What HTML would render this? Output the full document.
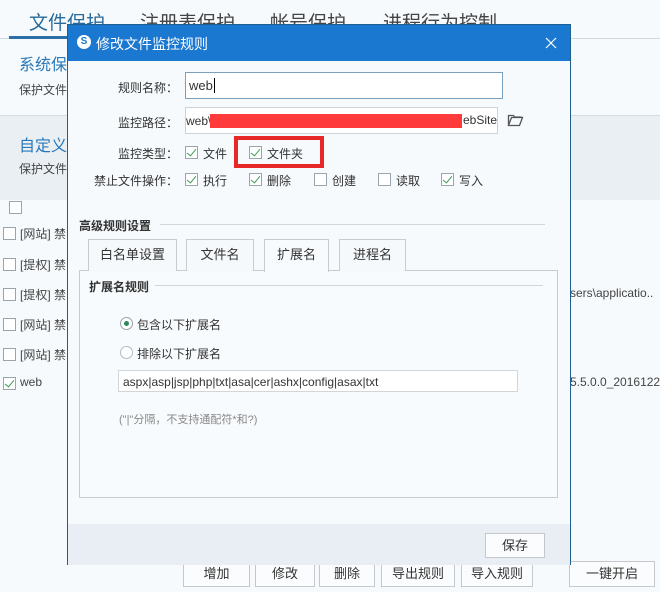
<!DOCTYPE html>
<html><head><meta charset="utf-8"><style>
*{margin:0;padding:0;box-sizing:border-box}
body{width:660px;height:592px;overflow:hidden;background:#f6fafc;font-family:"Liberation Sans","Noto Sans CJK SC",sans-serif;font-size:12px;color:#333;position:relative}
.a{position:absolute;white-space:nowrap}
.cb{position:absolute;width:13px;height:13px;border:1px solid #9aa4ac;background:#fff}
.cb.on::after{content:"";position:absolute;left:3px;top:0px;width:4px;height:8px;border:solid #3a9a5a;border-width:0 1.5px 1.5px 0;transform:rotate(40deg)}
.btn{position:absolute;height:26px;border:1px solid #c4c8cc;background:#fbfcfd;text-align:center;line-height:24px;font-size:13px;color:#333}
.tab{position:absolute;top:239px;height:32px;border:1px solid #c8ccd0;border-bottom:none;background:#f6f9fb;text-align:center;line-height:30px;font-size:13px;color:#333}
</style></head><body>
<div class="a" style="left:29px;top:8px;font-size:19px;color:#2a6a9a">文件保护</div>
<div class="a" style="left:140px;top:8px;font-size:19px;color:#444">注册表保护</div>
<div class="a" style="left:270px;top:8px;font-size:19px;color:#444">帐号保护</div>
<div class="a" style="left:383px;top:8px;font-size:19px;color:#444">进程行为控制</div>
<div class="a" style="left:0;top:38px;width:660px;height:1px;background:#d0d8de"></div>
<div class="a" style="left:9px;top:36px;width:70px;height:3px;background:#2a6fa8"></div>
<div class="a" style="left:19px;top:51px;font-size:16px;color:#2a78b8">系统保护</div>
<div class="a" style="left:19px;top:81px;font-size:12px;color:#444">保护文件</div>
<div class="a" style="left:0;top:115px;width:660px;height:85px;background:#e9eff3;border-top:1px solid #d6dde2"></div>
<div class="a" style="left:19px;top:132px;font-size:16px;color:#2a78b8">自定义</div>
<div class="a" style="left:19px;top:160px;font-size:12px;color:#444">保护文件</div>
<div class="cb" style="left:9px;top:201px"></div>
<div class="cb" style="left:3px;top:227px"></div><div class="a" style="left:20px;top:225px;font-size:12px;color:#444">[网站] 禁</div>
<div class="cb" style="left:3px;top:258px"></div><div class="a" style="left:20px;top:256px;font-size:12px;color:#444">[提权] 禁</div>
<div class="cb" style="left:3px;top:288px"></div><div class="a" style="left:20px;top:286px;font-size:12px;color:#444">[提权] 禁</div>
<div class="cb" style="left:3px;top:318px"></div><div class="a" style="left:20px;top:316px;font-size:12px;color:#444">[网站] 禁</div>
<div class="cb" style="left:3px;top:348px"></div><div class="a" style="left:20px;top:346px;font-size:12px;color:#444">[网站] 禁</div>
<div class="cb on" style="left:3px;top:377px"></div><div class="a" style="left:20px;top:375px;font-size:12px;color:#444">web</div>
<div class="a" style="left:570px;top:286px;font-size:12px;color:#444">sers\applicatio..</div>
<div class="a" style="left:570px;top:375px;font-size:12px;color:#444">5.5.0.0_2016122</div>
<div class="btn" style="left:183px;top:561px;width:67px">增加</div>
<div class="btn" style="left:255px;top:561px;width:60px">修改</div>
<div class="btn" style="left:319px;top:561px;width:56px">删除</div>
<div class="btn" style="left:381px;top:561px;width:74px">导出规则</div>
<div class="btn" style="left:461px;top:561px;width:72px">导入规则</div>
<div class="btn" style="left:569px;top:561px;width:86px">一键开启</div>

<div class="a" style="left:67px;top:24px;width:504px;height:541px;border:1px solid #1d5f8f;background:#f6fafd">
 <div class="a" style="left:0;top:0;width:502px;height:36px;background:#1b78d0"></div>
 <div class="a" style="left:9px;top:10px;width:14px;height:14px;border-radius:50%;background:#fff;color:#1b78d0;font-size:10px;font-weight:bold;text-align:center;line-height:14px">S</div>
 <div class="a" style="left:28px;top:9px;color:#fff;font-size:14px">修改文件监控规则</div>
 <svg class="a" style="left:477px;top:12px" width="12" height="12" viewBox="0 0 12 12"><path d="M1 1L11 11M11 1L1 11" stroke="#fff" stroke-width="1.2" fill="none"/></svg>
 <div class="a" style="left:0;top:499px;width:502px;height:41px;background:#e8eef3"></div>
</div>
<div class="a" style="left:118px;top:79px;font-size:12px">规则名称：</div>
<div class="a" style="left:185px;top:72px;width:318px;height:27px;border:1px solid #7aa0c0;background:#fff;padding:5px 3px;font-size:13px">web<span style="border-left:1px solid #000;margin-left:1px"></span></div>
<div class="a" style="left:118px;top:114px;font-size:12px">监控路径：</div>
<div class="a" style="left:185px;top:107px;width:313px;height:27px;border:1px solid #ccd2d6;background:#fff;padding:6px 0;font-size:12px">web\</div>
<div class="a" style="left:210px;top:114px;width:252px;height:14px;background:#ff3a3a"></div>
<div class="a" style="left:463px;top:113px;font-size:12px">ebSite</div>
<svg class="a" style="left:507px;top:113px" width="17" height="14" viewBox="0 0 17 14"><path d="M1.5 12.5V2.5h5l1 1.5h7M1.5 12.5h11l3-8h-11z" stroke="#555" stroke-width="1.3" fill="none"/></svg>
<div class="a" style="left:118px;top:145px;font-size:12px">监控类型：</div>
<div class="cb on" style="left:185px;top:146px"></div><div class="a" style="left:203px;top:145px">文件</div>
<div class="a" style="left:234px;top:136px;width:90px;height:32px;border:4px solid #e62828"></div>
<div class="cb on" style="left:249px;top:146px"></div><div class="a" style="left:267px;top:145px">文件夹</div>
<div class="a" style="left:94px;top:172px;font-size:12px">禁止文件操作：</div>
<div class="cb on" style="left:185px;top:173px"></div><div class="a" style="left:203px;top:172px">执行</div>
<div class="cb on" style="left:249px;top:173px"></div><div class="a" style="left:267px;top:172px">删除</div>
<div class="cb" style="left:314px;top:173px"></div><div class="a" style="left:332px;top:172px">创建</div>
<div class="cb" style="left:378px;top:173px"></div><div class="a" style="left:396px;top:172px">读取</div>
<div class="cb on" style="left:441px;top:173px"></div><div class="a" style="left:459px;top:172px">写入</div>
<div class="a" style="left:79px;top:217px;font-weight:bold;color:#333">高级规则设置</div>
<div class="a" style="left:160px;top:224px;width:385px;height:1px;background:#d0d6da"></div>
<div class="a" style="left:79px;top:270px;width:479px;height:228px;border:1px solid #c8ccd0;background:#f8fbfd"></div>
<div class="tab" style="left:88px;width:89px;">白名单设置</div>
<div class="tab" style="left:186px;width:68px;">文件名</div>
<div class="tab" style="left:264px;width:65px;top:239px;height:33px;background:#f8fbfd">扩展名</div>
<div class="tab" style="left:339px;width:67px;">进程名</div>
<div class="a" style="left:89px;top:278px;font-weight:bold">扩展名规则</div>
<div class="a" style="left:155px;top:285px;width:388px;height:1px;background:#d0d6da"></div>
<div class="a" style="left:120px;top:317px;width:13px;height:13px;border:1px solid #9aa4ac;border-radius:50%;background:#fff"><div style="position:absolute;left:3px;top:3px;width:5px;height:5px;border-radius:50%;background:#2f8a5a"></div></div>
<div class="a" style="left:137px;top:316px">包含以下扩展名</div>
<div class="a" style="left:120px;top:346px;width:13px;height:13px;border:1px solid #b4bcc2;border-radius:50%;background:#fff"></div>
<div class="a" style="left:137px;top:345px">排除以下扩展名</div>
<div class="a" style="left:118px;top:370px;width:400px;height:22px;border:1px solid #d0d6da;background:#fff;padding:4px 4px;font-size:12px">aspx|asp|jsp|php|txt|asa|cer|ashx|config|asax|txt</div>
<div class="a" style="left:119px;top:411px;font-size:11px;color:#888">("|"分隔，不支持通配符*和?)</div>
<div class="btn" style="left:485px;top:533px;width:60px;height:25px">保存</div>
</body></html>
